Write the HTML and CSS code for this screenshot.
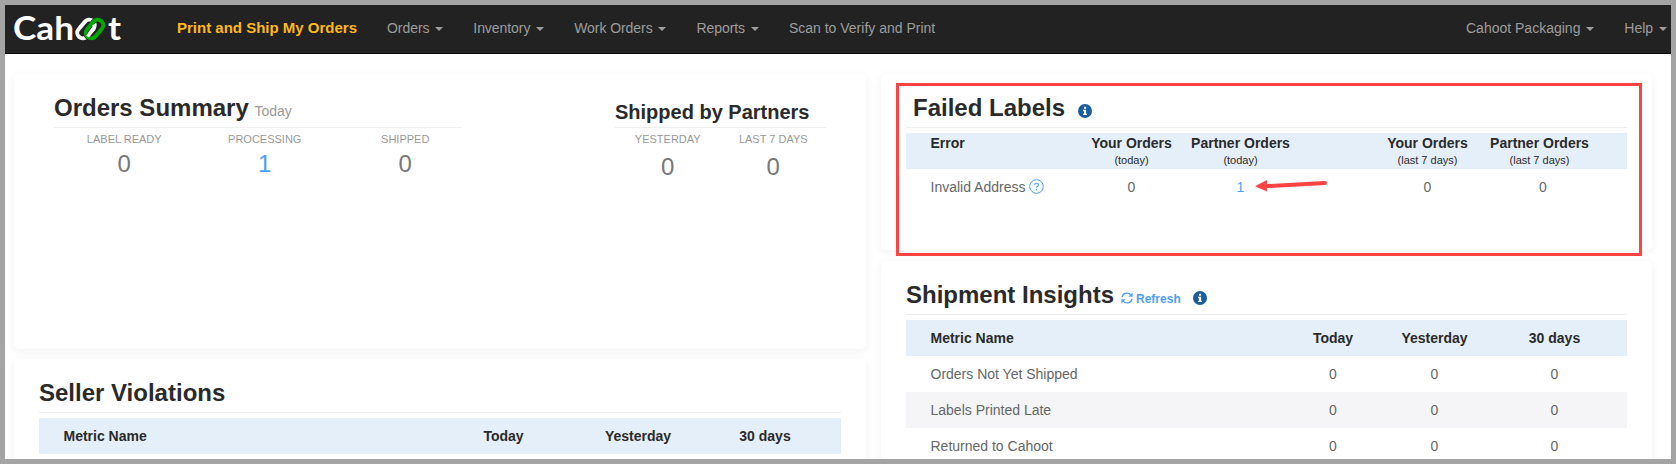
FILE: index.html
```html
<!DOCTYPE html>
<html lang="en">
<head>
  <meta charset="utf-8">
  <meta name="viewport" content="width=device-width, initial-scale=1.0">
  <title>Cahoot - Dashboard</title>
  <link rel="stylesheet" href="styles.css">
</head>
<body>

<nav class="navbar">
  <a class="brand" href="#">
    <svg width="112" height="34" viewBox="0 0 112 34">
      <g class="brand-text">
        <text x="0" y="28" textLength="61" lengthAdjust="spacingAndGlyphs">Cah</text>
        <text x="95" y="28" textLength="13" lengthAdjust="spacingAndGlyphs">t</text>
      </g>
      <g fill="none" stroke-width="4">
        <rect x="-10.5" y="-5.5" width="21" height="11" rx="5.5" stroke="#fff" transform="translate(73 17) rotate(-50)"/>
        <rect x="-10.5" y="-5.5" width="21" height="11" rx="5.5" stroke="#222" stroke-width="5" transform="translate(81.5 17) rotate(-50)"/>
        <rect x="-10.5" y="-5.5" width="21" height="11" rx="5.5" stroke="#00a800" transform="translate(81.5 17) rotate(-50)"/>
        <path d="M74.5 24.5L80 18Q82 15.5 81 12.5" stroke="#fff" stroke-width="3.4"/>
      </g>
    </svg>
  </a>
  <ul class="nav">
    <li><a class="active" href="#">Print and Ship My Orders</a></li>
    <li><a class="dropdown" href="#">Orders <b class="caret"></b></a></li>
    <li><a class="dropdown" href="#">Inventory <b class="caret"></b></a></li>
    <li><a class="dropdown" href="#">Work Orders <b class="caret"></b></a></li>
    <li><a class="dropdown" href="#">Reports <b class="caret"></b></a></li>
    <li><a href="#">Scan to Verify and Print</a></li>
  </ul>
  <ul class="nav nav-right">
    <li><a href="#">Cahoot Packaging <b class="caret"></b></a></li>
    <li><a href="#">Help <b class="caret"></b></a></li>
  </ul>
</nav>

<div class="content">
  <div class="col col-left">
    <div class="card summary">
      <div class="orders">
        <h2>Orders Summary <small>Today</small></h2>
        <div class="stats">
          <div class="stat"><span>LABEL READY</span><strong>0</strong></div>
          <div class="stat"><span>PROCESSING</span><strong><a href="#">1</a></strong></div>
          <div class="stat"><span>SHIPPED</span><strong>0</strong></div>
        </div>
      </div>
      <div class="partners">
        <h3>Shipped by Partners</h3>
        <div class="stats">
          <div class="stat"><span>YESTERDAY</span><strong>0</strong></div>
          <div class="stat"><span>LAST 7 DAYS</span><strong>0</strong></div>
        </div>
      </div>
    </div>

    <div class="card violations">
      <h2>Seller Violations</h2>
      <table>
        <colgroup><col class="v-name"><col class="v-today"><col class="v-yest"><col class="v-month"><col></colgroup>
        <tr><th>Metric Name</th><th>Today</th><th>Yesterday</th><th>30 days</th><th></th></tr>
      </table>
    </div>
  </div>

  <div class="col col-right">
    <div class="card failed">
      <h2>Failed Labels
        <svg class="info" width="14" height="14" viewBox="0 0 14 14"><circle cx="7" cy="7" r="7" fill="#1b5e9e"/><path d="M6 2.8h2.1v1.9H6zM5 5.8h3.1v3.9H9v1.4H5V9.7h1V7.2H5z" fill="#fff"/></svg>
      </h2>
      <table>
        <colgroup><col class="f-name"><col class="f-your"><col class="f-partner"><col class="f-gap"><col class="f-your7"><col class="f-partner7"><col></colgroup>
        <tr>
          <th>Error</th>
          <th>Your Orders<small>(today)</small></th>
          <th>Partner Orders<small>(today)</small></th>
          <th></th>
          <th>Your Orders<small>(last 7 days)</small></th>
          <th class="last">Partner Orders<small>(last 7 days)</small></th>
          <th></th>
        </tr>
        <tr>
          <td>Invalid Address <svg class="help" width="15" height="15" viewBox="0 0 15 15"><circle cx="7.5" cy="7.5" r="6.8" fill="none" stroke="#4da0f7"/><path d="M5.5 5.9C5.7 3.7 9.5 3.7 9.5 5.9C9.5 7.3 7.5 7.2 7.5 8.8M7.5 9.8V11.2" fill="none" stroke="#4da0f7" stroke-width="1.2"/></svg></td>
          <td>0</td>
          <td><a href="#">1</a></td>
          <td></td>
          <td>0</td>
          <td>0</td>
          <td></td>
        </tr>
      </table>
      <div class="highlight"></div>
      <svg class="arrow" width="74" height="14" viewBox="0 0 74 14"><path d="M10 7.2L70 4" stroke="#ff4343" stroke-width="4" stroke-linecap="round"/><path d="M0 7.2L12 1V12.5z" fill="#ff4343"/></svg>
    </div>

    <div class="card insights">
      <h2>Shipment Insights
        <a class="refresh" href="#"><svg width="12" height="12" viewBox="0 0 12 12"><path d="M1 5.2A5 5 0 0 1 10 3.2M11 6.8A5 5 0 0 1 2 8.8" fill="none" stroke="#4da0f7" stroke-width="1.3"/><path d="M11.6.6V4.8H7.4zM.4 11.4V7.2H4.6z" fill="#4da0f7"/></svg> Refresh</a>
        <svg class="info" width="14" height="14" viewBox="0 0 14 14"><circle cx="7" cy="7" r="7" fill="#1b5e9e"/><path d="M6 2.8h2.1v1.9H6zM5 5.8h3.1v3.9H9v1.4H5V9.7h1V7.2H5z" fill="#fff"/></svg>
      </h2>
      <table>
        <colgroup><col class="i-name"><col class="i-today"><col class="i-yest"><col class="i-month"><col></colgroup>
        <tr><th>Metric Name</th><th>Today</th><th>Yesterday</th><th>30 days</th><th></th></tr>
        <tr><td>Orders Not Yet Shipped</td><td>0</td><td>0</td><td>0</td><td></td></tr>
        <tr class="odd"><td>Labels Printed Late</td><td>0</td><td>0</td><td>0</td><td></td></tr>
        <tr><td>Returned to Cahoot</td><td>0</td><td>0</td><td>0</td><td></td></tr>
      </table>
    </div>
  </div>
</div>

</body>
</html>
```
FILE: styles.css
```css
*{
  box-sizing: border-box;
}
body{
  margin: 0;
  height: 464px;
  overflow: hidden;
  border: 5px solid #a4a4a4;
  background: #fff;
  color: #666;
  font: 14px/20px "Liberation Sans", Arial, sans-serif;
}
a{
  color: #4da0f7;
  text-decoration: none;
}
small{
  font-weight: normal;
}

/* navbar */
.navbar{
  display: flex;
  height: 49px;
  background: #222;
  border-bottom: 1px solid #080808;
}
.brand{
  width: 157px;
  padding: 7px 0 0 8px;
}
.brand svg{
  display: block;
  overflow: visible;
}
.brand-text{
  fill: #fff;
  font: bold 33px Lato, sans-serif;
}
.nav{
  display: flex;
  margin: 0;
  padding: 0;
  list-style: none;
}
.nav a{
  display: block;
  padding: 13px 15px;
  color: #9d9d9d;
  white-space: nowrap;
}
.nav a.active{
  color: #ffb819;
  font-weight: bold;
  font-size: 15px;
}
.nav a.dropdown{
  letter-spacing: -.06px;
}
.nav-right{
  margin-left: auto;
}
.nav-right li:last-child a{
  padding-right: 4px;
}
.caret{
  display: inline-block;
  margin-left: 2px;
  vertical-align: middle;
  border-top: 4px solid;
  border-left: 4px solid transparent;
  border-right: 4px solid transparent;
}

/* cards */
.content{
  display: flex;
  gap: 15px;
  height: 405px;
  padding: 20px 19px 0 9px;
  overflow: hidden;
}
.col{
  display: flex;
  flex-direction: column;
  gap: 10px;
}
.col-left{
  width: 852px;
}
.col-right{
  width: 771px;
  gap: 11px;
}
.card{
  position: relative;
  flex-shrink: 0;
  background: #fff;
  border-radius: 5px;
  box-shadow: 0 2px 10px rgba(0,0,0,.06);
}
h2, h3{
  margin: 0;
  color: #2a2a2a;
  border-bottom: 1px solid #eee;
}
h2{
  font-size: 24px;
  line-height: 28px;
}
h3{
  font-size: 20px;
  line-height: 28px;
}
h2 small{
  margin-left: -1px;
  color: #999;
  font-size: 14px;
}

/* orders summary */
.summary{
  display: flex;
  justify-content: space-between;
  height: 275px;
  padding: 20px 40px 0 40px;
}
.orders{
  width: 408px;
}
.partners{
  width: 211px;
}
.orders h2{
  padding-bottom: 2px;
}
.partners h3{
  padding: 4px 0 1px;
}
.stats{
  display: flex;
}
.stat{
  flex: 1;
  text-align: center;
}
.orders .stat{
  flex: 0 0 140.5px;
}
.stat span{
  display: block;
  padding-top: 1px;
  color: #999;
  font-size: 11px;
}
.stat strong{
  display: block;
  color: #777;
  font-size: 24px;
  font-weight: normal;
  line-height: 30px;
}
.partners .stat strong{
  padding-top: 3px;
}

/* tables */
.violations, .insights{
  height: 300px;
  padding: 20px 25px;
}
table{
  width: 100%;
  margin-top: 5px;
  table-layout: fixed;
  border-collapse: collapse;
}
th, td{
  height: 36px;
  padding: 0;
  text-align: center;
}
th:first-child, td:first-child{
  padding-left: 24.5px;
  text-align: left;
}
th{
  background: #e5effa;
  color: #2a2a2a;
}
.odd{
  background: #f5f5f7;
}
.violations h2{
  padding-bottom: 5px;
}
.insights h2{
  padding-bottom: 1px;
}
.v-name{ width: 399px; }
.v-today{ width: 131px; }
.v-yest{ width: 138px; }
.v-month{ width: 116px; }

.i-name{ width: 380px; }
.i-today{ width: 94px; }
.i-yest{ width: 109px; }
.i-month{ width: 131px; }

/* failed labels */
.failed{
  height: 176px;
  padding: 20px 25px;
}
.failed h2{
  padding: 0 0 5px 7px;
}
.failed th{
  line-height: 20px;
  vertical-align: top;
  white-space: nowrap;
}
.failed th.last{
  padding-right: 7px;
}
.failed th small{
  display: block;
  font-size: 11px;
  line-height: 15px;
}
.f-name{ width: 175px; }
.f-your{ width: 101px; }
.f-partner{ width: 117px; }
.f-gap{ width: 77px; }
.f-your7{ width: 103px; }
.f-partner7{ width: 128px; }
.info{
  margin-left: 6px;
  vertical-align: -2px;
}
.help{
  vertical-align: -2px;
}
.refresh{
  font-size: 12px;
}
.refresh svg{
  vertical-align: -1px;
}

/* callout over the failed labels card */
.highlight{
  position: absolute;
  top: 9px;
  left: 15px;
  width: 746px;
  height: 173px;
  border: 3px solid #ff4343;
  z-index: 2;
}
.arrow{
  position: absolute;
  top: 105px;
  left: 374px;
}
```
